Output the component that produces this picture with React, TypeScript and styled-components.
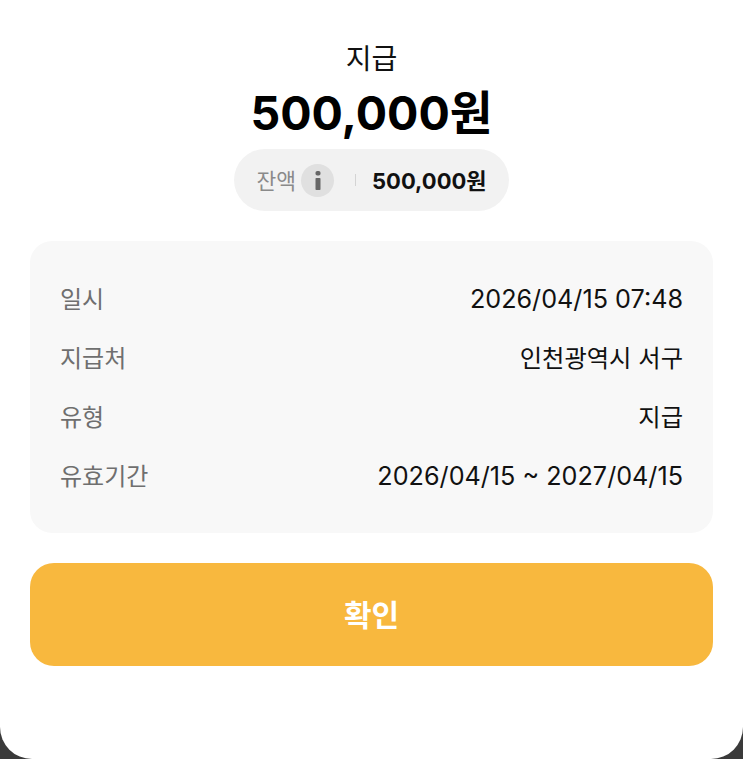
import React from 'react';
import styled, { createGlobalStyle } from 'styled-components';

const GlobalStyle = createGlobalStyle`
  html, body {
    margin: 0;
    padding: 0;
    background: #3a3a3a;
    overflow: hidden;
  }
  body {
    font-family: Inter, "Noto Sans CJK KR", sans-serif;
  }
`;

const Sheet = styled.div`
  width: 743px;
  height: 759px;
  box-sizing: border-box;
  padding: 42px 30px 0;
  background: #fff;
  border-radius: 0 0 32px 32px;
  display: flex;
  flex-direction: column;
`;

const Header = styled.div`
  display: flex;
  flex-direction: column;
  align-items: center;
`;

const Title = styled.div`
  font-size: 28px;
  line-height: 34px;
  color: #111;
`;

const Amount = styled.div`
  margin-top: 7px;
  font-size: 46.5px;
  line-height: 60px;
  font-weight: 700;
  color: #000;
`;

const BalancePill = styled.div`
  margin-top: 6px;
  height: 62px;
  box-sizing: border-box;
  padding: 0 22px;
  display: flex;
  align-items: center;
  background: #f2f2f2;
  border-radius: 31px;
`;

const BalanceLabel = styled.span`
  font-size: 21.5px;
  color: #8a8a8a;
  margin-bottom: 2px;
`;

const InfoBadge = styled.span`
  width: 33px;
  height: 33px;
  margin-left: 5px;
  border-radius: 50%;
  background: #e0e0e0;
  display: flex;
  align-items: center;
  justify-content: center;
  color: #666;
`;

const Divider = styled.span`
  width: 1px;
  height: 12px;
  margin: 0 17px 0 21px;
  background: #d4d4d4;
`;

const BalanceValue = styled.span`
  font-size: 22px;
  font-weight: 700;
  color: #111;
  margin-left: -1px;
  margin-bottom: 2px;
`;

const DetailCard = styled.div`
  margin-top: 30px;
  height: 292px;
  box-sizing: border-box;
  padding: 37px 30px 0;
  background: #f8f8f8;
  border-radius: 22px;
  display: flex;
  flex-direction: column;
  gap: 21px;
`;

const DetailRow = styled.div`
  height: 38px;
  display: flex;
  align-items: center;
  justify-content: space-between;
  font-size: 24px;
`;

const DetailLabel = styled.span`
  color: #6f6f6f;
`;

const DetailValue = styled.span<{ $numeric?: boolean }>`
  color: #111;
  font-size: ${(p) => (p.$numeric ? '25.2px' : '24.3px')};
  padding-top: ${(p) => (p.$numeric ? '4px' : '0')};
`;

const ConfirmButton = styled.button`
  margin-top: 30px;
  height: 103px;
  width: 100%;
  padding: 0 0 3px;
  border: none;
  border-radius: 24px;
  background: #f8b83e;
  color: #fff;
  font-family: inherit;
  font-size: 30px;
  font-weight: 700;
`;

const rows = [
  { label: '일시', value: '2026/04/15 07:48', numeric: true },
  { label: '지급처', value: '인천광역시 서구' },
  { label: '유형', value: '지급' },
  { label: '유효기간', value: '2026/04/15 ~ 2027/04/15', numeric: true },
];

const InfoIcon = () => (
  <svg width="6" height="19" viewBox="0 0 6 19" fill="currentColor">
    <rect x="0.5" y="0" width="5" height="4.5" rx="1.8" />
    <rect x="0.5" y="7" width="5" height="12" rx="0.8" />
  </svg>
);

export default function App() {
  return (
    <Sheet>
      <GlobalStyle />
      <Header>
        <Title>지급</Title>
        <Amount>500,000원</Amount>
        <BalancePill>
          <BalanceLabel>잔액</BalanceLabel>
          <InfoBadge>
            <InfoIcon />
          </InfoBadge>
          <Divider />
          <BalanceValue>500,000원</BalanceValue>
        </BalancePill>
      </Header>
      <DetailCard>
        {rows.map((row) => (
          <DetailRow key={row.label}>
            <DetailLabel>{row.label}</DetailLabel>
            <DetailValue $numeric={row.numeric}>{row.value}</DetailValue>
          </DetailRow>
        ))}
      </DetailCard>
      <ConfirmButton>확인</ConfirmButton>
    </Sheet>
  );
}
